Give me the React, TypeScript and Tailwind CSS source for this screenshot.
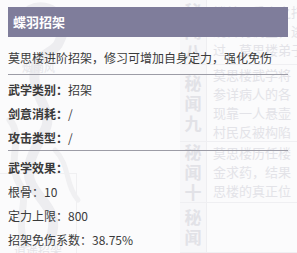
import React from "react";

const font = { fontFamily: '"Noto Sans CJK SC", "Noto Sans", sans-serif' };

function BgRow({ chars, lines, h, first }: { chars: string[]; lines: string[]; h: number; first?: boolean }) {
  return (
    <div className={`flex border-b border-[#efeff2] ${first ? "" : ""}`} style={{ height: h }}>
      <div className="w-[27px] shrink-0 flex flex-col items-center justify-center bg-[#f7f7f9] border-r border-[#eeeef1]">
        {chars.map((c, i) => (
          <div key={i} className="text-[17px] leading-[20px] font-bold text-[#e2e2e7]">{c}</div>
        ))}
      </div>
      <div className="flex-1 flex flex-col justify-center pl-[6px] overflow-hidden">
        {lines.map((l, i) => (
          <div key={i} className="text-[13px] leading-[19px] whitespace-nowrap text-[#e3e3e8]">{l}</div>
        ))}
      </div>
    </div>
  );
}

export default function App() {
  return (
    <div className="relative w-[297px] h-[253px] overflow-hidden bg-[#fbfbfc]" style={font}>
      {/* background page */}
      <div className="flex h-full">
        <div className="relative w-[180px] shrink-0 h-full">
          <svg className="absolute left-0 top-0" width="90" height="253" viewBox="0 0 90 253">
            <path d="M30 10 C50 0 70 20 60 40 C55 55 40 50 35 70 C30 95 55 110 45 130 C35 150 20 170 35 190 C45 205 60 215 50 240" stroke="#ededf0" strokeWidth="10" fill="none" strokeLinecap="round" />
            <path d="M10 120 C25 140 5 160 20 185 C30 200 15 220 25 245" stroke="#efeff1" strokeWidth="7" fill="none" strokeLinecap="round" />
            <path d="M55 150 C70 165 65 185 78 200" stroke="#f0f0f2" strokeWidth="5" fill="none" strokeLinecap="round" />
          </svg>
          <div className="absolute left-[22px] top-[61px] text-[11px] leading-[12px] text-[#e6e6ea]">烟雨风</div>
          <div className="absolute left-0 top-[173px] w-[77px] h-[80px] border-t border-r border-[#f0f0f2]" />
          <div className="absolute left-[14px] top-[243px] text-[12px] leading-[14px] text-[#e4e4e8]">逍遥招架</div>
        </div>
        <div className="flex-1 flex flex-col -mt-[2px]">
          <BgRow chars={["秘", "闻", "八"]} lines={["楼弟子受人之托前往", "观音村调查，途中遇上", "过，莫思楼弟子出手"]} h={80} first />
          <BgRow chars={["秘", "闻", "九"]} lines={["莫思楼武学将", "参详病人的各", "现靠一人悬壶", "村民反被构陷"]} h={80} />
          <BgRow chars={["秘", "闻", "十"]} lines={["莫思楼历任楼", "金求药，结果", "思楼的真正位"]} h={70} />
          <BgRow chars={["秘", "闻"]} lines={[]} h={60} />
        </div>
      </div>

      {/* tooltip */}
      <div className="absolute left-[8px] top-[7px] w-[280px] text-[12px] text-[#3a3a3a]">
        <div className="h-[30px] bg-[#7f7d9b] flex items-center pl-[5px] text-[13px] font-bold text-white">蝶羽招架</div>
        <div className="pt-[9px] pb-[4px] border-b border-[#9c9ca6]">
          <div className="h-[24px] leading-[24px] whitespace-nowrap">莫思楼进阶招架，修习可增加自身定力，强化免伤</div>
        </div>
        <div className="pt-[3px] border-b border-[#9c9ca6]">
          <div className="h-[24px] leading-[24px]"><span className="font-bold">武学类别：</span>招架</div>
          <div className="h-[24px] leading-[24px]"><span className="font-bold">剑意消耗：</span>/</div>
          <div className="h-[24px] leading-[24px]"><span className="font-bold">攻击类型：</span>/</div>
        </div>
        <div className="pt-[5px]">
          <div className="h-[24px] leading-[24px] font-bold">武学效果：</div>
          <div className="h-[24px] leading-[24px]">根骨：10</div>
          <div className="h-[24px] leading-[24px]">定力上限：800</div>
          <div className="h-[24px] leading-[24px]">招架免伤系数：38.75%</div>
        </div>
      </div>
    </div>
  );
}
